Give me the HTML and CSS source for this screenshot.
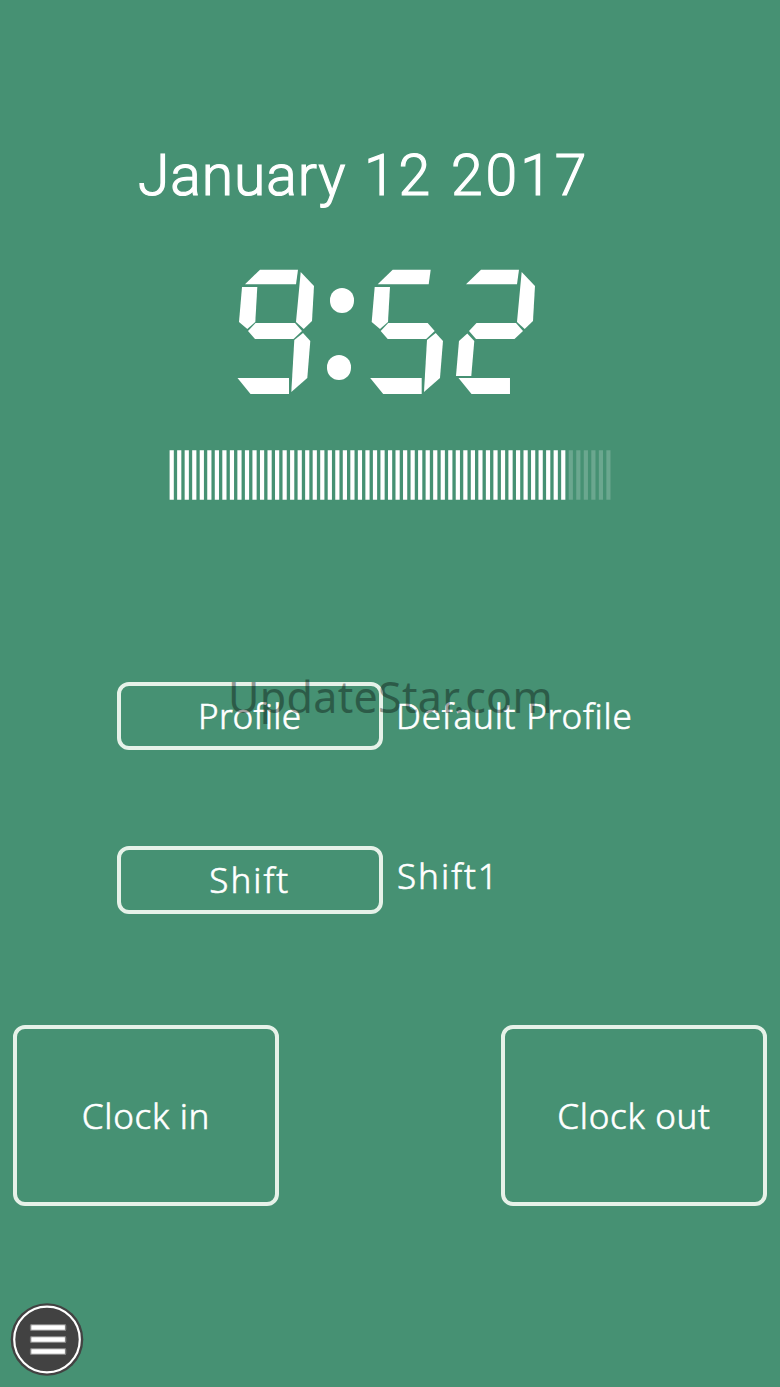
FILE: index.html
```html
<!DOCTYPE html>
<html lang="en">
<head>
<meta charset="utf-8">
<title>Time clock</title>
<link rel="stylesheet" href="styles.css">
</head>
<body>
<main class="screen">
  <h1 class="date"><span class="month">January</span> 12 2017</h1>
  <div class="clock" role="img" aria-label="9:52">
    <div class="digit"><i class="seg a"></i><i class="seg b"></i><i class="seg c"></i><i class="seg d"></i><i class="seg f"></i><i class="seg g"></i></div>
    <div class="colon"><i class="dot"></i><i class="dot dot-low"></i></div>
    <div class="digit"><i class="seg a"></i><i class="seg c"></i><i class="seg d"></i><i class="seg f"></i><i class="seg g"></i></div>
    <div class="digit digit-last"><i class="seg a"></i><i class="seg b"></i><i class="seg d"></i><i class="seg e"></i><i class="seg g"></i></div>
  </div>
  <svg class="seconds" viewBox="0 0 442 50" width="442" height="50">
    <path class="tick tick-on" d="M.6 25H397"/>
    <path class="tick tick-off" d="M399.7 25H441.5"/>
  </svg>
  <div class="row row-profile">
    <button class="box pick"><span class="t-profile">Profile</span></button>
    <span class="value t-default">Default Profile</span>
    <span class="watermark">UpdateStar.com</span>
  </div>
  <div class="row row-shift">
    <button class="box pick"><span class="t-shift">Shift</span></button>
    <span class="value t-shift">Shift1</span>
  </div>
  <div class="punch">
    <button class="box big"><span class="t-punch">Clock in</span></button>
    <button class="box big"><span class="t-punch">Clock out</span></button>
  </div>
  <button class="menu" aria-label="Menu">
    <svg width="74" height="74" viewBox="0 0 74 74">
      <circle cx="37" cy="36.5" r="36.3" fill="#424242"/>
      <circle cx="37" cy="36.5" r="32.8" fill="none" stroke="#fff" stroke-width="2.2"/>
      <g fill="#fff" stroke="#828282" stroke-width="1.4">
        <rect x="20.6" y="21.6" width="35" height="5.8" rx="1"/>
        <rect x="20.6" y="33.6" width="35" height="5.8" rx="1"/>
        <rect x="20.6" y="45.6" width="35" height="5.8" rx="1"/>
      </g>
    </svg>
  </button>
</main>
</body>
</html>
```
FILE: styles.css
```css
* { box-sizing: border-box; }
body { margin: 0; background: #469173; }
.screen {
  width: 780px; height: 1387px; overflow: hidden;
  display: flex; flex-direction: column; align-items: flex-start;
  background: #469173; color: #fff;
  font-family: "Noto Sans", "Open Sans", sans-serif; font-weight: 300;
  -webkit-text-stroke: .6px #fff;
}
button { font: inherit; color: inherit; background: none; padding: 0; border: 0; }
span, h1 { white-space: nowrap; }
.date { margin: 136px 0 0 138px; height: 80px; font-family: Roboto, sans-serif; font-size: 57px; line-height: 80px; font-weight: 300; letter-spacing: 3px; word-spacing: .8px; -webkit-text-stroke: 1.2px #fff; }
.month { letter-spacing: .9px; }

.clock { margin: 53px 0 0 234px; height: 126px; display: flex; }
.digit { display: grid; flex: none; width: 80px; height: 126px; }
.digit-last { margin-left: 8.3px; }
.seg { grid-area: 1 / 1; background: #fff; }
.a { clip-path: polygon(11px 15.3px, 26px .7px, 64px .7px, 62px 15.3px); }
.b { clip-path: polygon(66.7px 3px, 80px 17px, 78px 52px, 69.7px 60px, 62px 53px); }
.c { clip-path: polygon(69px 64px, 76.3px 72px, 73.3px 109px, 57.3px 123px, 60.3px 71px); }
.d { clip-path: polygon(3.5px 109px, 55px 109px, 55px 125px, 16.5px 125px); }
.e { clip-path: polygon(1px 107px, 4px 72px, 12.3px 64.5px, 19.3px 72px, 16.3px 107px); }
.f { clip-path: polygon(8px 18px, 23.3px 18px, 21.3px 53px, 13.3px 60px, 5px 53px); }
.g { clip-path: polygon(14px 62px, 21.5px 54px, 61px 54px, 68px 62px, 59.5px 70px, 21px 70px); }
.colon { flex: none; width: 52.7px; padding: 19.2px 0 0 15.9px; }
.dot { display: block; width: 24.6px; height: 24.6px; border-radius: 50%; background: #fff; }
.dot-low { margin: 42.4px 0 0 -3px; }

.seconds { display: block; margin: 55px 0 0 169px; }
.tick { fill: none; stroke: #fff; stroke-width: 49.4; stroke-dasharray: 4.2 3.33; }
.tick-off { opacity: .2; }

.box { border: 4px solid #e6f2e9; border-radius: 12px; font-size: 35px; line-height: 48px; display: flex; align-items: center; justify-content: center; }
.row { position: relative; display: flex; margin-left: 117px; height: 68px; font-size: 35px; line-height: 48px; }
.row-profile { margin-top: 182px; }
.row-shift { margin-top: 96px; }
.pick { width: 265.5px; height: 68px; }
.value { margin: 10px 0 0 13.5px; }
.row-shift .value { margin: 6px 0 0 14.5px; }
.t-profile { letter-spacing: .4px; }
.t-default { letter-spacing: .8px; }
.t-shift { letter-spacing: 2px; }
.t-punch { letter-spacing: .7px; }
.watermark { position: absolute; left: 111px; top: -15px; font-size: 43px; line-height: 60px; font-weight: 400; letter-spacing: .3px; color: #000; opacity: .37; -webkit-text-stroke: 0; }

.punch { margin: 111px 0 0 13px; width: 754px; display: flex; justify-content: space-between; }
.big { width: 266px; height: 181px; }
.menu { margin: 96.5px 0 0 10px; height: 74px; }
.menu svg { display: block; }
```
